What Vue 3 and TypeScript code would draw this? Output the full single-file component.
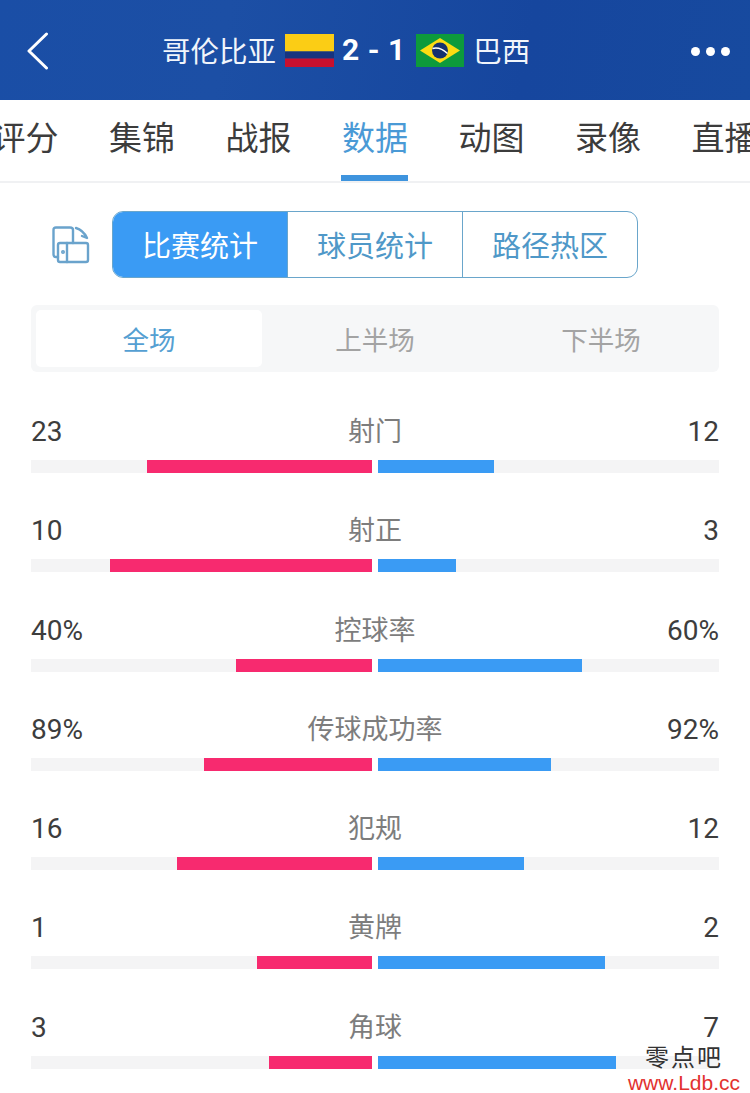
<script setup lang="ts">
interface Stat { name: string; left: string; right: string; lw: number; rw: number }
const tabs = ['评分', '集锦', '战报', '数据', '动图', '录像', '直播']
const modes = ['比赛统计', '球员统计', '路径热区']
const periods = ['全场', '上半场', '下半场']
const stats: Stat[] = [
  { name: '射门', left: '23', right: '12', lw: 225, rw: 116 },
  { name: '射正', left: '10', right: '3', lw: 262, rw: 78 },
  { name: '控球率', left: '40%', right: '60%', lw: 136, rw: 204 },
  { name: '传球成功率', left: '89%', right: '92%', lw: 168, rw: 173 },
  { name: '犯规', left: '16', right: '12', lw: 195, rw: 146 },
  { name: '黄牌', left: '1', right: '2', lw: 115, rw: 227 },
  { name: '角球', left: '3', right: '7', lw: 103, rw: 238 },
]
const pct = (w: number) => `${(w / 341) * 100}%`
</script>

<template>
  <div class="page">
    <header class="header">
      <svg class="back" width="26" height="40" viewBox="0 0 26 40" fill="none">
        <path d="M21.5 2 L4 19 L21.5 36" stroke="#fff" stroke-width="3" stroke-linecap="round" stroke-linejoin="round" />
      </svg>
      <div class="match">
        <span class="team">哥伦比亚</span>
        <svg class="flag" width="49" height="33" viewBox="0 0 49 33">
          <rect width="49" height="17.500" fill="#fbcd15" />
          <rect y="17.500" width="49" height="7" fill="#17347f" />
          <rect y="24.500" width="49" height="8.500" fill="#c8102e" />
        </svg>
        <span class="score">2 - 1</span>
        <svg class="flag" width="48" height="33" viewBox="0 0 48 33">
          <rect width="48" height="33" fill="#0d9a3c" />
          <path d="M24 4 L44 16.500 L24 29 L4 16.500 Z" fill="#fbdc12" />
          <circle cx="24" cy="16.500" r="8" fill="#14306f" />
          <path d="M16.500 14.500 Q24 12.500 31.500 19.500" stroke="#fff" stroke-width="1.400" fill="none" />
        </svg>
        <span class="team">巴西</span>
      </div>
      <div class="dots"><i></i><i></i><i></i></div>
    </header>

    <nav class="tabs">
      <div v-for="t in tabs" :key="t" class="tab" :class="{ on: t === '数据' }">{{ t }}</div>
    </nav>

    <section class="modes">
      <svg class="swap" width="38" height="38" viewBox="0 0 38 38" fill="none" stroke="#6aa3cc" stroke-width="2.400" stroke-linejoin="round" stroke-linecap="round">
        <path d="M6 31 H4 Q1.500 31 1.500 28 V4 Q1.500 1.500 4 1.500 H18 Q21 1.500 21 4 V17" />
        <path d="M24 2 Q31 4 35 12 L30 10" />
        <rect x="6" y="17" width="30" height="19" rx="2" />
        <path d="M15 17 V36" />
        <circle cx="11" cy="26" r="0.800" />
      </svg>
      <div class="seg">
        <div v-for="(m, i) in modes" :key="m" class="seg-item" :class="{ on: i === 0 }">{{ m }}</div>
      </div>
    </section>

    <section class="periods">
      <div v-for="(p, i) in periods" :key="p" class="period" :class="{ on: i === 0 }">{{ p }}</div>
    </section>

    <section class="stats">
      <div v-for="s in stats" :key="s.name" class="stat">
        <div class="labels">
          <span class="num">{{ s.left }}</span>
          <span class="name">{{ s.name }}</span>
          <span class="num">{{ s.right }}</span>
        </div>
        <div class="bars">
          <div class="track left"><div class="fill pink" :style="{ width: pct(s.lw) }"></div></div>
          <div class="track"><div class="fill blue" :style="{ width: pct(s.rw) }"></div></div>
        </div>
      </div>
    </section>

    <div class="mark">
      <div class="mark-cn">零点吧</div>
      <div class="mark-url">www.Ldb.cc</div>
    </div>
  </div>
</template>

<style>
html, body { margin: 0; background: #fff; }
</style>

<style scoped>
.page {
  position: relative;
  width: 750px;
  height: 1093px;
  overflow: hidden;
  background: #fff;
  font-family: "Noto Sans CJK SC", "Liberation Sans", sans-serif;
}
.header {
  height: 100px;
  box-sizing: border-box;
  padding: 32px 20px 0 25px;
  display: flex;
  justify-content: space-between;
  align-items: flex-start;
  background: linear-gradient(100deg, #1a4ea6 0%, #1c4fa5 30%, #16469e 70%, #174a9f 100%);
  color: #fff;
}
.back { display: block; flex: none; }
.match {
  position: absolute;
  left: 162px;
  top: 33px;
  display: flex;
  align-items: center;
  height: 34px;
  color: #fff;
}
.team { font-size: 28.500px; line-height: 34px; color: #f1f5fb; white-space: nowrap; }
.flag { flex: none; margin-left: 9px; }
.score {
  font-family: "Roboto", "Liberation Sans", sans-serif;
  font-weight: 700;
  font-size: 30px;
  line-height: 34px;
  margin-left: 8px;
  word-spacing: 1px;
  white-space: pre;
}
.flag + .score + .flag { margin-left: 11px; }
.flag + .team { margin-left: 9px; }
.dots { display: flex; gap: 6px; margin-top: 15px; margin-left: auto; }
.dots i { width: 9px; height: 9px; border-radius: 50%; background: #fff; display: block; }

.tabs {
  height: 83px;
  box-sizing: border-box;
  border-bottom: 2px solid #f0f1f3;
  display: flex;
  justify-content: center;
  gap: 51.500px;
  white-space: nowrap;
  overflow: hidden;
}
.tab {
  flex: none;
  position: relative;
  width: 65px;
  display: flex;
  justify-content: center;
  font-size: 33px;
  line-height: 73px;
  color: #3c3c3c;
}
.tab.on { color: #4a9ad6; }
.tab.on::after {
  content: "";
  position: absolute;
  left: -2px;
  right: 0;
  bottom: 0;
  height: 6px;
  background: #3e94de;
}

.modes {
  display: flex;
  align-items: center;
  padding: 28px 0 0 52px;
}
.swap { flex: none; margin-right: 22px; }
.seg {
  display: flex;
  width: 526px;
  height: 67px;
  box-sizing: border-box;
  border: 1.500px solid #6aa6cb;
  border-radius: 11px;
  overflow: hidden;
  background: #fff;
}
.seg-item {
  flex: 1;
  text-align: center;
  font-size: 29px;
  line-height: 64px;
  color: #4f98c8;
  border-left: 1.500px solid #6aa6cb;
}
.seg-item:first-child { border-left: 0; }
.seg-item.on { background: #3a9bf4; color: #fff; }

.periods {
  display: flex;
  margin: 27px 31px 0;
  height: 67px;
  box-sizing: border-box;
  padding: 5px;
  background: #f6f7f8;
  border-radius: 6px;
}
.period {
  flex: 1;
  text-align: center;
  font-size: 26.500px;
  line-height: 57px;
  color: #a3a3a3;
  border-radius: 5px;
}
.period.on { background: #fff; color: #559fd2; }

.stats { margin: 40px 31px 0; }
.stat { height: 99.300px; }
.labels {
  display: flex;
  justify-content: space-between;
  align-items: center;
  position: relative;
  height: 40px;
}
.num {
  font-family: "Roboto", "Liberation Sans", sans-serif;
  font-size: 28px;
  line-height: 40px;
  color: #3d3d3d;
}
.name {
  position: absolute;
  left: 0;
  right: 0;
  top: -2px;
  text-align: center;
  font-size: 27px;
  line-height: 40px;
  color: #7d7d7d;
}
.bars {
  display: flex;
  gap: 6px;
  margin-top: 8px;
}
.track {
  flex: 1;
  height: 13px;
  background: #f4f4f5;
  display: flex;
}
.track.left { justify-content: flex-end; }
.fill { height: 100%; }
.pink { background: #f72a6f; }
.blue { background: #3a9bf4; }

.mark {
  position: absolute;
  right: 10px;
  bottom: -3px;
  text-align: center;
}
.mark-cn {
  font-family: "Noto Sans CJK SC", "Liberation Serif", serif;
  font-size: 24px;
  line-height: 18px;
  margin-bottom: 5px;
  letter-spacing: 2px;
  color: #333;
}
.mark-url {
  font-family: "Liberation Sans", sans-serif;
  font-size: 21px;
  line-height: 26px;
  color: #e2322f;
}
</style>
